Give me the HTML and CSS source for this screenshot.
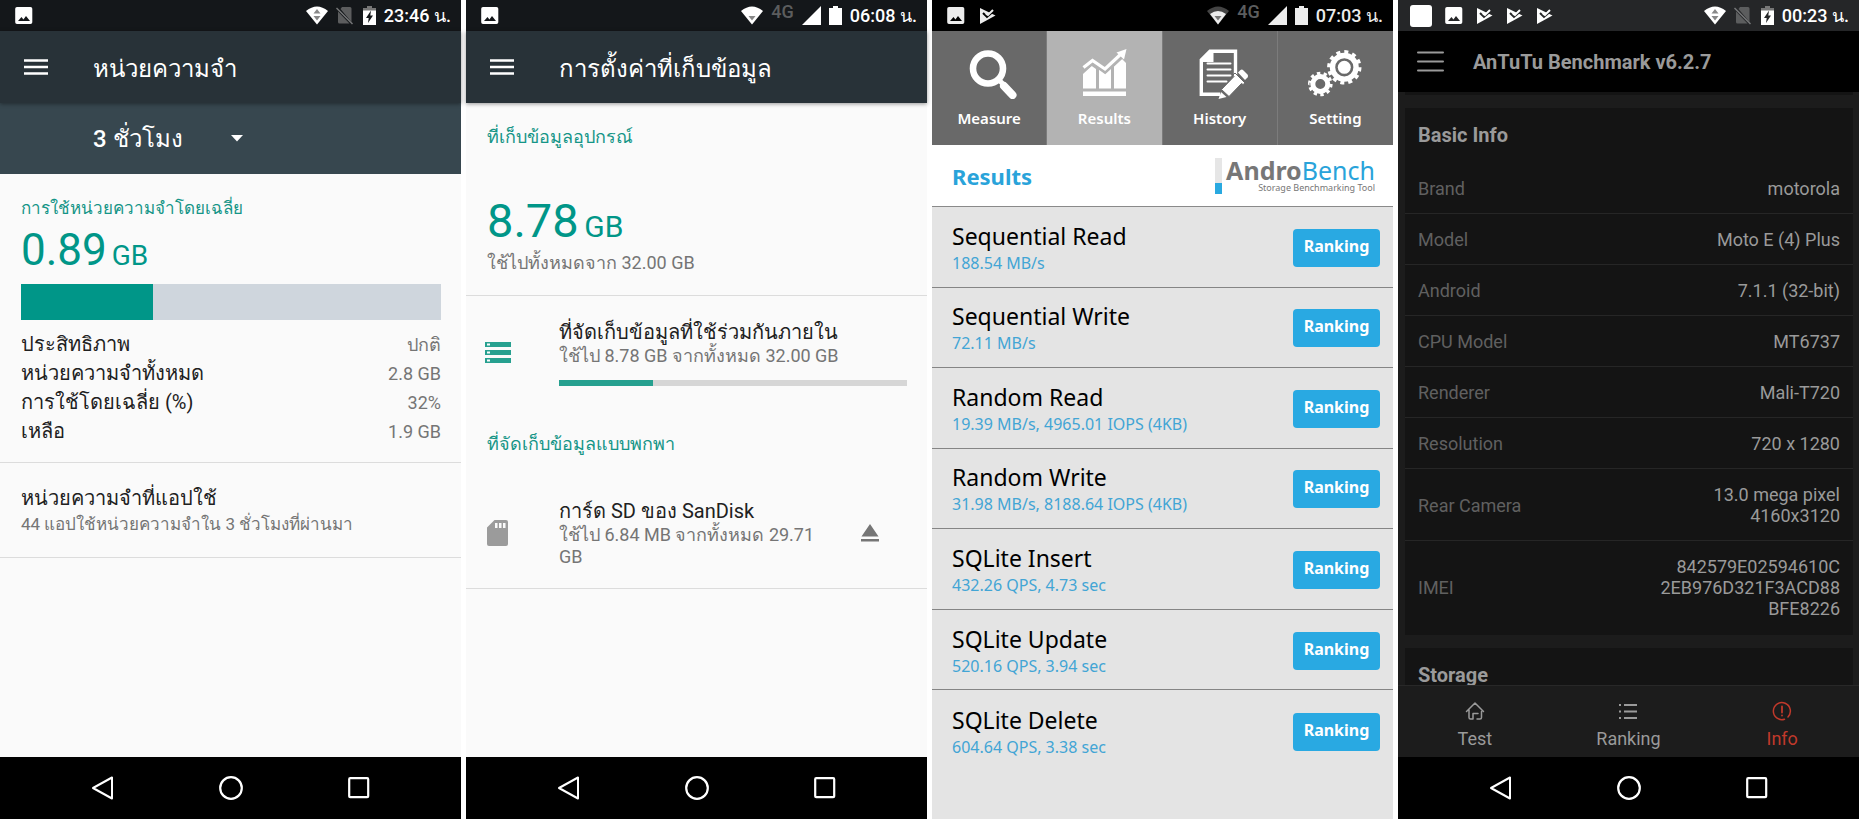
FILE: index.html
```
<!DOCTYPE html>
<html lang="th">
<head>
  <meta charset="UTF-8">
  <meta name="viewport" content="width=device-width, initial-scale=1">
  <title>Moto E (4) Plus</title>
  <link rel="stylesheet" href="styles.css">
</head>
<body>
  <!-- Shared icons -->
  <svg class="sprite" aria-hidden="true">
    <symbol id="i-photo" viewBox="0 0 18 18">
      <path fill="currentColor" fill-rule="evenodd" d="M2 0h13.500a1.800 1.800 0 0 1 1.800 1.800v13.400a1.800 1.800 0 0 1-1.800 1.800H2a1.800 1.800 0 0 1-1.800-1.800V1.800A1.800 1.800 0 0 1 2 0zM3 14h12l-4-5-2.600 3.400L6.500 10z"/>
    </symbol>
    <symbol id="i-play" viewBox="0 0 17 18">
      <path fill="currentColor" d="M1 1l15.500 7.500L1 17z"/>
      <path fill="none" stroke="var(--bar)" stroke-width="2" d="M4 6l4 4 8-7"/>
      <path fill="none" stroke="currentColor" stroke-width="2" d="M7 6.500l2 1.500 5-5"/>
    </symbol>
    <symbol id="i-wifi-data" viewBox="0 0 22 19">
      <path fill="currentColor" d="M0 5Q11-4 22 5L11 18.500z"/>
      <path fill="#888" d="M11 3l3.500 4.500h-7zM11 14.500L7.500 10h7z"/>
    </symbol>
    <symbol id="i-wifi" viewBox="0 0 22 19">
      <path fill="currentColor" d="M0 5Q11-4 22 5L11 18.500z"/>
      <path fill="#888" d="M11 14.500L7.500 10h7z"/>
    </symbol>
    <symbol id="i-wifi-weak" viewBox="0 0 22 19">
      <path fill="#444" d="M0 5Q11-4 22 5L11 18.500z"/>
      <path fill="currentColor" d="M3 8Q11 2 19 8L11 18.500z"/>
      <path fill="#777" d="M11 14.500L7.500 10h7z"/>
    </symbol>
    <symbol id="i-nosim" viewBox="0 0 19 19">
      <path fill="#5c5d5e" d="M6 1h8a1.500 1.500 0 0 1 1.500 1.500V16L4.500 3zM2 5.500L13.500 17.500H3.500A1.500 1.500 0 0 1 2 16z"/>
      <path stroke="#77787a" stroke-width="1.500" d="M.5 2l16 16"/>
    </symbol>
    <symbol id="i-signal" viewBox="0 0 19 19">
      <path fill="currentColor" d="M19 0v19H0z"/>
    </symbol>
    <symbol id="i-battery" viewBox="0 0 13 19">
      <path fill="currentColor" d="M4 0h5v2h4v17H0V2h4z"/>
    </symbol>
    <symbol id="i-charging" viewBox="0 0 13 19">
      <path fill="#777" d="M4 0h5v2h4v4H0V2h4z"/>
      <path fill="currentColor" d="M0 4.500h13V19H0z"/>
      <path fill="var(--bar)" d="M8 4.500L3 12h2.700L5 17l5-7.500H7.300z"/>
    </symbol>
    <symbol id="i-menu" viewBox="0 0 24 16">
      <path stroke="currentColor" stroke-width="2.600" d="M0 1.500h24M0 8h24M0 14.500h24"/>
    </symbol>
    <symbol id="i-back" viewBox="0 0 24 24">
      <path fill="none" stroke="#fff" stroke-width="2" stroke-linejoin="round" d="M21 1.500v21L2 12z"/>
    </symbol>
    <symbol id="i-home" viewBox="0 0 24 24">
      <circle cx="12" cy="12" r="10.800" fill="none" stroke="#fff" stroke-width="2.200"/>
    </symbol>
    <symbol id="i-recent" viewBox="0 0 24 24">
      <rect x="2.200" y="2.200" width="19" height="19" rx="1" fill="none" stroke="#fff" stroke-width="2.200"/>
    </symbol>
  </svg>

  <main class="phones">

    <!-- Memory -->
    <section class="phone phone-memory">
      <div class="status">
        <svg width="18" height="18"><use href="#i-photo"/></svg>
        <div class="status-right">
          <svg width="22" height="19"><use href="#i-wifi-data"/></svg>
          <svg width="19" height="19"><use href="#i-nosim"/></svg>
          <svg width="13" height="19"><use href="#i-charging"/></svg>
          <span>23:46 น.</span>
        </div>
      </div>
      <header class="appbar">
        <button class="icon-btn" aria-label="Menu"><svg width="24" height="16"><use href="#i-menu"/></svg></button>
        <h1>หน่วยความจำ</h1>
      </header>
      <div class="period">
        <select aria-label="Period">
          <option>3 ชั่วโมง</option>
        </select>
        <svg class="caret" width="12" height="7" viewBox="0 0 12 7"><path fill="#fff" d="M0 0h12L6 6.500z"/></svg>
      </div>
      <div class="content">
        <div class="block usage">
          <h2>การใช้หน่วยความจำโดยเฉลี่ย</h2>
          <p class="amount">0.89 <small>GB</small></p>
          <div class="bar"><div class="bar-fill" style="width: 31.500%"></div></div>
          <dl class="stats">
            <div><dt>ประสิทธิภาพ</dt><dd>ปกติ</dd></div>
            <div><dt>หน่วยความจำทั้งหมด</dt><dd>2.8 GB</dd></div>
            <div><dt>การใช้โดยเฉลี่ย (%)</dt><dd>32%</dd></div>
            <div><dt>เหลือ</dt><dd>1.9 GB</dd></div>
          </dl>
        </div>
        <div class="block apps">
          <h3>หน่วยความจำที่แอปใช้</h3>
          <p>44 แอปใช้หน่วยความจำใน 3 ชั่วโมงที่ผ่านมา</p>
        </div>
      </div>
      <nav class="navbar">
        <button aria-label="Back"><svg width="24" height="24"><use href="#i-back"/></svg></button>
        <button aria-label="Home"><svg width="24" height="24"><use href="#i-home"/></svg></button>
        <button aria-label="Recent apps"><svg width="24" height="24"><use href="#i-recent"/></svg></button>
      </nav>
    </section>

    <!-- Storage settings -->
    <section class="phone phone-storage">
      <div class="status">
        <svg width="18" height="18"><use href="#i-photo"/></svg>
        <div class="status-right">
          <svg width="22" height="19"><use href="#i-wifi"/></svg>
          <span class="net">4G</span>
          <svg width="19" height="19"><use href="#i-signal"/></svg>
          <svg width="13" height="19"><use href="#i-battery"/></svg>
          <span>06:08 น.</span>
        </div>
      </div>
      <header class="appbar">
        <button class="icon-btn" aria-label="Menu"><svg width="24" height="16"><use href="#i-menu"/></svg></button>
        <h1>การตั้งค่าที่เก็บข้อมูล</h1>
      </header>
      <div class="content">
        <div class="block total">
          <h2>ที่เก็บข้อมูลอุปกรณ์</h2>
          <p class="amount amount-lg">8.78 <small>GB</small></p>
          <p>ใช้ไปทั้งหมดจาก 32.00 GB</p>
        </div>
        <div class="block volumes">
          <div class="volume">
            <svg width="26" height="21" viewBox="0 0 26 21">
              <path fill="#26a08f" fill-rule="evenodd" d="M0 0h26v5H0zM2 1.500v2h3v-2zM0 8h26v5H0zM2 9.500v2h3v-2zM0 16h26v5H0zM2 17.500v2h3v-2z"/>
            </svg>
            <div class="volume-text">
              <h3>ที่จัดเก็บข้อมูลที่ใช้ร่วมกันภายใน</h3>
              <p>ใช้ไป 8.78 GB จากทั้งหมด 32.00 GB</p>
              <div class="bar bar-thin"><div class="bar-fill" style="width: 27%"></div></div>
            </div>
          </div>
          <h2>ที่จัดเก็บข้อมูลแบบพกพา</h2>
          <div class="volume">
            <svg width="26" height="26" viewBox="0 0 26 26">
              <path fill="#9b9b9b" fill-rule="evenodd" d="M9.500 0H21a2 2 0 0 1 2 2v22a2 2 0 0 1-2 2H4a2 2 0 0 1-2-2V7.500zM10 3v5h2.500V3zM14 3v5h2.500V3zM18 3v5h2.500V3z"/>
            </svg>
            <div class="volume-text">
              <h3>การ์ด SD ของ SanDisk</h3>
              <p>ใช้ไป 6.84 MB จากทั้งหมด 29.71 GB</p>
            </div>
            <button class="icon-btn eject" aria-label="Eject">
              <svg width="18" height="18" viewBox="0 0 18 18"><path fill="#757575" d="M9 0l8.500 12.500H.5zM0 15h18v2.600H0z"/></svg>
            </button>
          </div>
        </div>
      </div>
      <nav class="navbar">
        <button aria-label="Back"><svg width="24" height="24"><use href="#i-back"/></svg></button>
        <button aria-label="Home"><svg width="24" height="24"><use href="#i-home"/></svg></button>
        <button aria-label="Recent apps"><svg width="24" height="24"><use href="#i-recent"/></svg></button>
      </nav>
    </section>

    <!-- AndroBench -->
    <section class="phone phone-bench" lang="en">
      <div class="status">
        <svg width="18" height="18"><use href="#i-photo"/></svg>
        <svg width="17" height="18"><use href="#i-play"/></svg>
        <div class="status-right">
          <svg width="22" height="19"><use href="#i-wifi-weak"/></svg>
          <span class="net">4G</span>
          <svg width="19" height="19"><use href="#i-signal"/></svg>
          <svg width="13" height="19"><use href="#i-battery"/></svg>
          <span>07:03 น.</span>
        </div>
      </div>
      <div class="tabs">
        <button>
          <svg width="56" height="50" viewBox="0 0 56 50">
            <circle cx="27" cy="19.500" r="15" fill="none" stroke="#fff" stroke-width="6.600"/>
            <path stroke="#fff" stroke-width="5" d="M36 29l6 6"/>
            <path stroke="#fff" stroke-width="8" stroke-linecap="round" d="M43 37l8.500 9"/>
          </svg>
          Measure
        </button>
        <button class="active">
          <svg width="56" height="50" viewBox="0 0 56 50">
            <path fill="#fff" d="M7 25l8.700-8 4.300 3v19.500H7zM23 20l6.700 4 5.300-5v20.500H23zM38 17.500l8-7.500 4 4v25.500H38zM7 42.500h43v4.500H7z"/>
            <path fill="none" stroke="#b3b3b3" stroke-width="6" d="M7 19.500l9.500-7L29 21.500 47 5"/>
            <path fill="none" stroke="#fff" stroke-width="3.200" d="M7.500 18.500l9-7L29 20 45.500 4.500"/>
            <path fill="#fff" d="M50.500 0l-10 3.500 7.500 7z"/>
          </svg>
          Results
        </button>
        <button>
          <svg width="56" height="50" viewBox="0 0 56 50">
            <path fill="none" stroke="#fff" stroke-width="3.400" d="M43.500 28V2.300H18L9.300 11v34.300H28"/>
            <path fill="#fff" d="M17 2h4.500v11H9v-3z"/>
            <path stroke="#fff" stroke-width="2" stroke-linecap="round" d="M15.500 14.500h23M15.500 20.500h23M15.500 26.500h23M15.500 32.500h19"/>
            <path fill="#fff" stroke="#696969" d="M29.500 40.500L42 27.500l-1-1.500 2-2 10 10-2 1.500-1.500-1L37 47.500z"/>
            <path fill="#fff" d="M29 43l5.500 5-8 2z"/>
            <path fill="#fff" d="M46 23.500l2.500-2.500q1.500-1 3 .5l4 4q1 1.500 0 3L53 31z"/>
          </svg>
          History
        </button>
        <button>
          <svg width="56" height="50" viewBox="0 0 56 50" fill="none" stroke="#fff">
            <circle cx="37.300" cy="18.300" r="11.800" stroke-width="5.400"/>
            <circle cx="37.300" cy="18.300" r="15.400" stroke-width="3.600" pathLength="24" stroke-dasharray="1"/>
            <circle cx="37.300" cy="18.300" r="6.500" fill="#fff" stroke="none"/>
            <circle cx="13.300" cy="35" r="7.500" stroke-width="5"/>
            <circle cx="13.300" cy="35" r="10.800" stroke-width="3" pathLength="20" stroke-dasharray="1"/>
          </svg>
          Setting
        </button>
      </div>
      <div class="brand">
        <h2>Results</h2>
        <div class="logo">
          <div class="logo-name"><b>Andro</b><span>Bench</span></div>
          <div class="logo-sub">Storage Benchmarking Tool</div>
        </div>
      </div>
      <ul class="results">
        <li>
          <div><h3>Sequential Read</h3><p>188.54 MB/s</p></div>
          <button>Ranking</button>
        </li>
        <li>
          <div><h3>Sequential Write</h3><p>72.11 MB/s</p></div>
          <button>Ranking</button>
        </li>
        <li>
          <div><h3>Random Read</h3><p>19.39 MB/s, 4965.01 IOPS (4KB)</p></div>
          <button>Ranking</button>
        </li>
        <li>
          <div><h3>Random Write</h3><p>31.98 MB/s, 8188.64 IOPS (4KB)</p></div>
          <button>Ranking</button>
        </li>
        <li>
          <div><h3>SQLite Insert</h3><p>432.26 QPS, 4.73 sec</p></div>
          <button>Ranking</button>
        </li>
        <li>
          <div><h3>SQLite Update</h3><p>520.16 QPS, 3.94 sec</p></div>
          <button>Ranking</button>
        </li>
        <li>
          <div><h3>SQLite Delete</h3><p>604.64 QPS, 3.38 sec</p></div>
          <button>Ranking</button>
        </li>
      </ul>
    </section>

    <!-- AnTuTu -->
    <section class="phone phone-antutu" lang="en">
      <div class="status">
        <span class="blank"></span>
        <svg width="18" height="18"><use href="#i-photo"/></svg>
        <svg width="17" height="18"><use href="#i-play"/></svg>
        <svg width="17" height="18"><use href="#i-play"/></svg>
        <svg width="17" height="18"><use href="#i-play"/></svg>
        <div class="status-right">
          <svg width="22" height="19"><use href="#i-wifi-data"/></svg>
          <svg width="19" height="19"><use href="#i-nosim"/></svg>
          <svg width="13" height="19"><use href="#i-charging"/></svg>
          <span>00:23 น.</span>
        </div>
      </div>
      <header class="appbar">
        <button class="icon-btn" aria-label="Menu">
          <svg width="27" height="21" viewBox="0 0 27 21"><path stroke="#9a9a9a" stroke-width="2" stroke-linecap="round" d="M1 1.500h25M1 10.500h25M1 19.500h25"/></svg>
        </button>
        <h1>AnTuTu Benchmark v6.2.7</h1>
      </header>
      <div class="scroll">
        <div class="card card-end"></div>
        <div class="card">
          <h2>Basic Info</h2>
          <table>
            <tr><th>Brand</th><td>motorola</td></tr>
            <tr><th>Model</th><td>Moto E (4) Plus</td></tr>
            <tr><th>Android</th><td>7.1.1 (32-bit)</td></tr>
            <tr><th>CPU Model</th><td>MT6737</td></tr>
            <tr><th>Renderer</th><td>Mali-T720</td></tr>
            <tr><th>Resolution</th><td>720 x 1280</td></tr>
            <tr><th>Rear Camera</th><td>13.0 mega pixel<br>4160x3120</td></tr>
            <tr><th>IMEI</th><td>842579E02594610C<br>2EB976D321F3ACD88<br>BFE8226</td></tr>
          </table>
        </div>
        <div class="card">
          <h2>Storage</h2>
        </div>
      </div>
      <div class="bottom-tabs">
        <button>
          <svg width="20" height="20" viewBox="0 0 20 20" fill="none" stroke="currentColor" stroke-width="1.500" stroke-linecap="round" stroke-linejoin="round">
            <path d="M4 9v7.500q0 1.500 1.500 1.500H8v-5.500h5M1.500 10.500L10 2l8.500 8.500M16.500 10.500v6q0 1.500-1.500 1.500h-3"/>
          </svg>
          Test
        </button>
        <button>
          <svg width="20" height="20" viewBox="0 0 20 20" fill="none" stroke="currentColor" stroke-width="1.800">
            <path d="M1 4h2M6 4h13M1 10.500h2M6 10.500h13M1 17h2M6 17h13"/>
          </svg>
          Ranking
        </button>
        <button class="active">
          <svg width="20" height="20" viewBox="0 0 20 20" fill="none" stroke="currentColor" stroke-width="1.500" stroke-linecap="round">
            <path d="M12.500 18.200A8.500 8.500 0 1 1 16 16"/>
            <path stroke-width="1.800" d="M10 5.500v6M10 14.300v.2"/>
          </svg>
          Info
        </button>
      </div>
      <nav class="navbar">
        <button aria-label="Back"><svg width="24" height="24"><use href="#i-back"/></svg></button>
        <button aria-label="Home"><svg width="24" height="24"><use href="#i-home"/></svg></button>
        <button aria-label="Recent apps"><svg width="24" height="24"><use href="#i-recent"/></svg></button>
      </nav>
    </section>

  </main>
</body>
</html>
```
FILE: styles.css
```
* {
  box-sizing: border-box;
}

body {
  margin: 0;
  background: #fff;
  font-family: Roboto, sans-serif;
  font-size: 18px;
}

h1, h2, h3, p, ul, dl, dd {
  margin: 0;
  padding: 0;
  font-weight: normal;
}

button, select {
  font: inherit;
  color: inherit;
  border: 0;
  padding: 0;
  background: none;
  cursor: pointer;
}

svg {
  display: block;
  flex: none;
}

.sprite {
  position: absolute;
  width: 0;
  height: 0;
}

.phones {
  display: grid;
  grid-template-columns: repeat(4, 1fr);
  gap: 5px;
  height: 100vh;
}

.phone {
  --bar: #14171a;
  display: flex;
  flex-direction: column;
  min-width: 0;
  min-height: 0;
  background: #fafafa;
}

/* Status bar */
.status {
  display: flex;
  align-items: center;
  gap: 14px;
  height: 31px;
  flex: none;
  padding: 0 10px 0 15px;
  background: var(--bar);
  color: #fff;
}

.status-right {
  display: flex;
  align-items: center;
  gap: 8px;
  margin-left: auto;
  font-weight: 500;
  line-height: 32px;
  white-space: nowrap;
}

.net {
  color: #5c5d5e;
  line-height: 24px;
  align-self: flex-start;
}

/* App bar */
.appbar {
  display: flex;
  align-items: center;
  gap: 45px;
  height: 72px;
  flex: none;
  padding: 0 24px;
  background: #283238;
  color: #fff;
  box-shadow: 0 1px 4px rgba(0, 0, 0, 0.4);
  z-index: 1;
}

.appbar h1 {
  padding-top: 3px;
  font-size: 24px;
  line-height: 40px;
}

.period {
  display: flex;
  align-items: center;
  height: 71px;
  flex: none;
  padding-left: 93px;
  background: #37474f;
  color: #fff;
  gap: 8px;
}

.period select {
  appearance: none;
  width: 130px;
  font-size: 24px;
  font-weight: 500;
  line-height: 40px;
}

.content {
  flex: 1;
  min-height: 0;
  overflow: hidden;
  color: #757575;
}

.block {
  padding: 22px 20px 20px 21px;
  border-bottom: 1px solid #dcdcdc;
}

.block h2 {
  color: #159587;
  font-size: 18px;
  line-height: 24px;
}

.block h3, .stats dt {
  color: #212121;
  font-size: 20px;
  line-height: 26px;
}

.amount {
  margin-top: 6px;
  color: #009688;
  font-size: 44px;
  line-height: 48px;
}

.amount small {
  font-size: 28px;
  line-height: 1;
  margin-left: -6px;
}

.amount-lg {
  margin: 46px 0 4px;
  font-size: 47px;
  line-height: 52px;
}

.amount-lg small {
  font-size: 30px;
}

.bar {
  height: 36px;
  margin: 10px 0;
  background: #cfd6dd;
}

.bar-fill {
  height: 100%;
  background: #009688;
}

.bar-thin {
  height: 6px;
  margin: 13px 0 0;
  background: #d6d6d6;
}

.bar-thin .bar-fill {
  background: #26a08f;
}

.stats div {
  display: flex;
  justify-content: space-between;
}

.stats dt, .stats dd {
  line-height: 29px;
}

.usage {
  padding-bottom: 16px;
}

.usage h2, .apps p {
  font-size: 17px;
}

.apps p {
  line-height: 26px;
}

.total p:last-child {
  line-height: 24px;
}

.volumes {
  padding-top: 23px;
}

.volume {
  display: flex;
  align-items: center;
  gap: 48px;
  margin-left: -2px;
}

.volume-text {
  flex: 1;
}

.volume p {
  line-height: 22px;
}

.volumes h2 {
  margin: 46px 0 42px;
}

.eject {
  margin: 0 28px 0 -24px;
}

/* Android navigation buttons */
.navbar {
  display: flex;
  justify-content: center;
  height: 62px;
  flex: none;
  background: #000;
}

.navbar button {
  display: flex;
  align-items: center;
  justify-content: center;
  width: 128px;
}

/* AndroBench */
.phone-bench {
  --bar: #000;
  background: #e4e4e4;
  font-family: "Noto Sans", sans-serif;
}

.phone-bench .status {
  color: #ececec;
  font-family: Roboto, sans-serif;
}

.tabs {
  display: grid;
  grid-template-columns: repeat(4, 1fr);
  height: 114px;
  flex: none;
  background: #696969;
  color: #fff;
}

.tabs button {
  display: flex;
  flex-direction: column;
  align-items: center;
  gap: 7px;
  padding-top: 18px;
  border-right: 1px solid #7c7c7c;
  font-size: 15px;
  font-weight: 600;
  line-height: 24px;
}

.tabs button:last-child {
  border-right: 0;
}

.tabs .active {
  background: #b3b3b3;
}

.brand {
  display: flex;
  align-items: center;
  justify-content: space-between;
  height: 62px;
  flex: none;
  padding: 0 18px 0 20px;
  background: #fff;
  border-bottom: 1px solid #8a8a8a;
}

.brand h2 {
  color: #29a3da;
  font-size: 22px;
  font-weight: 700;
}

.logo {
  padding-left: 11px;
  background: linear-gradient(#e6e6e6 70%, #29a9e0 70%) left / 7px 100% no-repeat;
  color: #777;
  text-align: right;
}

.logo-name {
  font-size: 25px;
  line-height: 24px;
}

.logo-name span {
  color: #29a3da;
}

.logo-sub {
  font-size: 9px;
  line-height: 12px;
}

.results {
  display: grid;
  grid-auto-rows: 1fr;
  flex: 1;
  margin-bottom: 48px;
  list-style: none;
}

.results li {
  display: flex;
  align-items: center;
  justify-content: space-between;
  padding: 2px 13px 0 20px;
  border-bottom: 1px solid #858585;
}

.results li:last-child {
  border-bottom: 0;
}

.results h3 {
  color: #000;
  font-size: 23px;
  line-height: 30px;
}

.results p {
  color: #42a5d5;
  font-size: 16px;
  line-height: 24px;
}

.results button {
  width: 87px;
  height: 38px;
  padding-bottom: 4px;
  border-radius: 4px;
  background: #29a9e2;
  color: #fff;
  font-size: 16px;
  font-weight: 700;
}

/* AnTuTu */
.phone-antutu {
  --bar: #252628;
  background: #1c1c1c;
  color: #9a9a9a;
}

.phone-antutu .status {
  padding-left: 12px;
  gap: 13px;
}

.blank {
  width: 22px;
  height: 22px;
  border-radius: 3px;
  background: #fff;
}

.phone-antutu .appbar {
  gap: 29px;
  height: 61px;
  padding: 0 19px;
  background: #000;
  color: #9a9a9a;
  box-shadow: none;
}

.phone-antutu h1 {
  padding-top: 0;
  font-size: 20px;
  font-weight: 700;
}

.scroll {
  flex: 1;
  min-height: 0;
  overflow: hidden;
  padding: 0 6px 0 7px;
}

.card {
  margin-bottom: 13px;
  padding-bottom: 2px;
  background: #141414;
}

.card-end {
  height: 3px;
}

.card h2 {
  padding: 14px 13px;
  font-size: 20px;
  font-weight: 700;
  line-height: 27px;
}

.card table {
  width: 100%;
  border-collapse: collapse;
}

.card th, .card td {
  padding: 15px 13px 14px;
  line-height: 21px;
}

.card th {
  color: #606060;
  font-weight: normal;
  text-align: left;
}

.card td {
  text-align: right;
}

.card tr + tr {
  border-top: 1px solid #262626;
}

.bottom-tabs {
  display: grid;
  grid-template-columns: repeat(3, 1fr);
  height: 72px;
  flex: none;
  border-top: 1px solid #282828;
}

.bottom-tabs button {
  display: flex;
  flex-direction: column;
  align-items: center;
  gap: 6px;
  padding-top: 15px;
  line-height: 24px;
}

.bottom-tabs .active {
  color: #c0392b;
}
```
